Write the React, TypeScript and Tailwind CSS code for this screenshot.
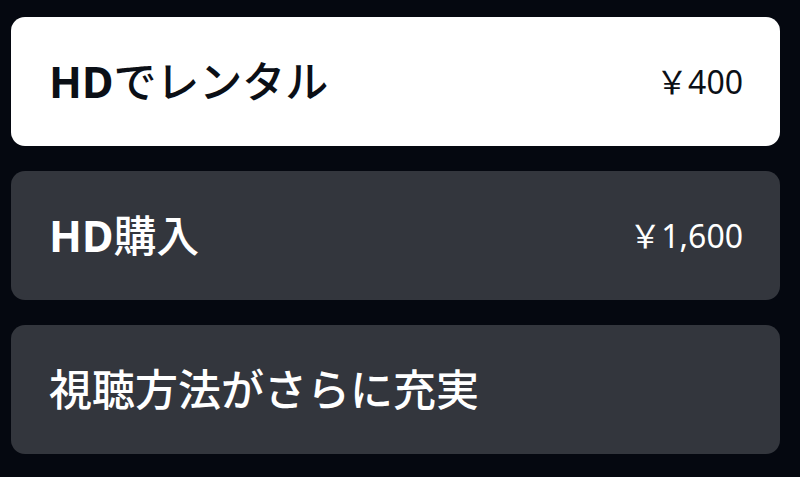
const FONT = "[font-family:'Noto_Sans','Noto_Sans_CJK_JP',sans-serif]";

type Option = {
  prefix?: string;
  label: string;
  price?: string;
  selected?: boolean;
};

const OPTIONS: Option[] = [
  { prefix: "HD", label: "でレンタル", price: "￥400", selected: true },
  { prefix: "HD", label: "購入", price: "￥1,600" },
  { label: "視聴方法がさらに充実" },
];

export default function App() {
  return (
    <div className={`h-[477px] w-[800px] overflow-hidden bg-[#050810] pl-[11px] pt-[17px] ${FONT}`}>
      <div className="flex w-[769px] flex-col gap-[25px]">
        {OPTIONS.map((o) => (
          <OptionRow key={o.label} option={o} />
        ))}
      </div>
    </div>
  );
}

function OptionRow({ option }: { option: Option }) {
  const tone = option.selected ? "bg-white text-[#0b0f16]" : "bg-[#33363d] text-white";
  return (
    <div className={`flex h-[129px] items-center justify-between rounded-[14px] pl-[38px] pr-[37px] ${tone}`}>
      <span className="text-[43px] font-medium leading-none">
        {option.prefix && <span className="font-bold">{option.prefix}</span>}
        {option.label}
      </span>
      {option.price && <span className="text-[32px] leading-none">{option.price}</span>}
    </div>
  );
}
